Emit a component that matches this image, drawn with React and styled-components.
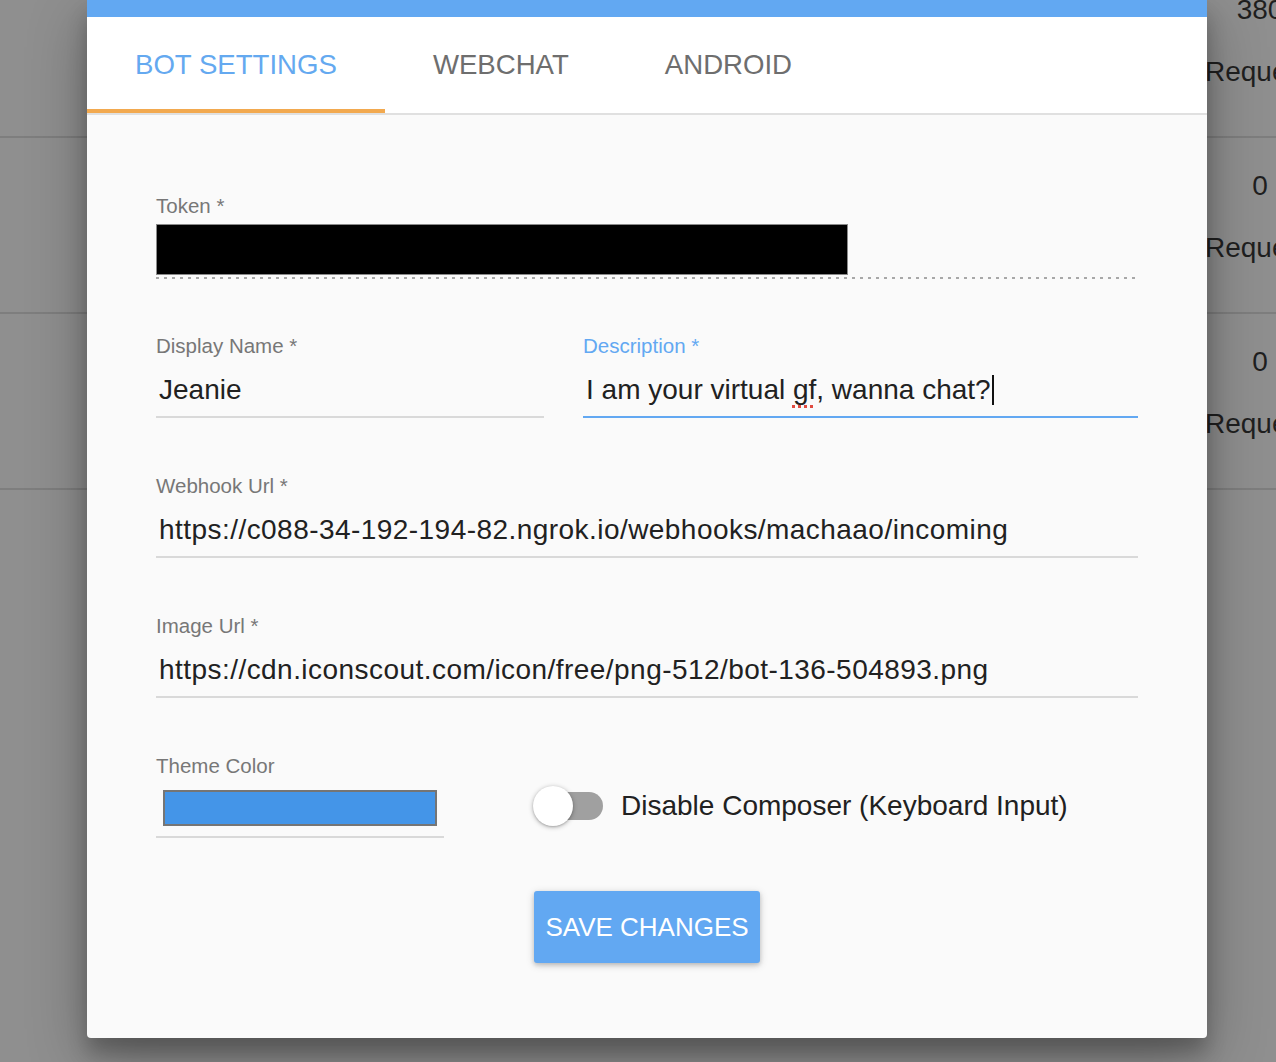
import React from "react";
import styled, { createGlobalStyle } from "styled-components";

const GlobalStyle = createGlobalStyle`
  html, body {
    margin: 0;
    padding: 0;
    overflow: hidden;
  }
  body {
    font-family: "Liberation Sans", Arial, Helvetica, sans-serif;
  }
  * {
    box-sizing: border-box;
  }
`;

const Page = styled.div`
  position: relative;
  width: 100vw;
  height: 100vh;
  background-color: #8f8f8f;
  overflow: hidden;
`;

const Backdrop = styled.div`
  display: flex;
  flex-direction: column;
  margin-top: -38px;
`;

const BackRow = styled.div`
  height: 176px;
  border-bottom: 2px solid #7e7e7e;
  display: flex;
  justify-content: flex-end;
`;

const Stat = styled.div`
  width: 110px;
  margin-right: -39px;
  padding-top: 33px;
  display: flex;
  flex-direction: column;
  gap: 32px;
  text-align: center;
  font-size: 28px;
  line-height: 30px;
  color: #1f1f1f;
  white-space: nowrap;
`;

const Dialog = styled.div`
  position: absolute;
  left: 87px;
  top: 0;
  width: 1120px;
  background-color: #fafafa;
  border-radius: 0 0 4px 4px;
  box-shadow: 0 19px 60px rgba(0, 0, 0, 0.3), 0 15px 20px rgba(0, 0, 0, 0.22);
`;

const TopBar = styled.div`
  height: 17px;
  background-color: #62a8f2;
`;

const Tabs = styled.div`
  display: flex;
  background-color: #ffffff;
  border-bottom: 2px solid #e0e0e0;
`;

const Tab = styled.div`
  height: 96px;
  padding: 4px 48px 0;
  display: flex;
  align-items: center;
  font-size: 27.6px;
  color: ${({ $active }) => ($active ? "#64a9f0" : "#6e6e6e")};
  border-bottom: 4px solid ${({ $active }) => ($active ? "#f2a94f" : "transparent")};
  cursor: pointer;
`;

const Form = styled.div`
  display: flex;
  flex-direction: column;
  padding: 79px 69px 75px;
`;

const Row = styled.div`
  height: ${({ $h }) => $h || 140}px;
  display: flex;
  gap: 39px;
`;

const Field = styled.div`
  display: flex;
  flex-direction: column;
  width: ${({ $w }) => ($w ? `${$w}px` : "auto")};
  flex: ${({ $w }) => ($w ? "none" : "1")};
`;

const Label = styled.div`
  height: 24px;
  line-height: 24px;
  font-size: 20.5px;
  color: ${({ $focused }) => ($focused ? "#62a8f2" : "#777777")};
`;

const TokenBox = styled.div`
  margin-top: 6px;
  width: 692px;
  height: 51px;
  background-color: #000;
  border: 1px solid #8a8a8a;
`;

const DottedLine = styled.div`
  margin-top: 2px;
  height: 2px;
  background-image: repeating-linear-gradient(
    to right,
    #a8a8a8 0 3px,
    transparent 3px 8px
  );
`;

const InputBox = styled.div`
  margin-top: 6px;
  height: 54px;
  padding-left: 3px;
  display: flex;
  align-items: center;
  font-size: 28px;
  letter-spacing: ${({ $spaced }) => ($spaced ? "0.45px" : "0")};
  color: #212121;
  white-space: nowrap;
  border-bottom: 2px solid ${({ $focused }) => ($focused ? "#62a8f2" : "#d9d9d9")};
`;

const Misspelled = styled.span`
  text-decoration: underline dotted #e04a3f;
  text-decoration-thickness: 3px;
  text-underline-offset: 6px;
`;

const Caret = styled.span`
  display: inline-block;
  width: 2px;
  height: 30px;
  margin-left: 1px;
  background-color: #111;
  vertical-align: middle;
`;

const Swatch = styled.div`
  margin: 0 0 4px 4px;
  width: 274px;
  height: 36px;
  background-color: ${({ $color }) => $color};
  border: 2px solid #757575;
`;

const ToggleRow = styled.label`
  margin: 32px 0 0 50px;
  height: 40px;
  display: flex;
  align-items: center;
  gap: 18px;
  font-size: 28px;
  color: #212121;
  cursor: pointer;
`;

const Toggle = styled.div`
  position: relative;
  width: 70px;
  height: 40px;
`;

const Track = styled.div`
  position: absolute;
  left: 10px;
  top: 6px;
  width: 60px;
  height: 28px;
  border-radius: 14px;
  background-color: #a0a0a0;
`;

const Thumb = styled.div`
  position: absolute;
  left: 0;
  top: 0;
  width: 40px;
  height: 40px;
  border-radius: 50%;
  background-color: #fff;
  box-shadow: 0 1px 5px rgba(0, 0, 0, 0.3), 0 1px 2px rgba(0, 0, 0, 0.15);
`;

const SaveButton = styled.button`
  align-self: center;
  width: 226px;
  height: 72px;
  border: none;
  border-radius: 3px;
  background-color: #62a8f2;
  color: #fff;
  font-family: inherit;
  font-size: 26px;
  text-transform: uppercase;
  cursor: pointer;
  box-shadow: 0 2px 8px rgba(0, 0, 0, 0.16), 0 2px 4px rgba(0, 0, 0, 0.16);
`;

const stats = ["380", "0", "0"];

export default function App() {
  return (
    <>
      <GlobalStyle />
      <Page>
        <Backdrop>
          {stats.map((n, i) => (
            <BackRow key={i}>
              <Stat>
                <span>{n}</span>
                <span>Requests</span>
              </Stat>
            </BackRow>
          ))}
        </Backdrop>

        <Dialog>
          <TopBar />
          <Tabs>
            <Tab $active>BOT SETTINGS</Tab>
            <Tab>WEBCHAT</Tab>
            <Tab>ANDROID</Tab>
          </Tabs>

          <Form>
            <Row>
              <Field>
                <Label>Token *</Label>
                <TokenBox />
                <DottedLine />
              </Field>
            </Row>

            <Row>
              <Field $w={388}>
                <Label>Display Name *</Label>
                <InputBox>Jeanie</InputBox>
              </Field>
              <Field>
                <Label $focused>Description *</Label>
                <InputBox $focused>
                  I am your virtual&nbsp;<Misspelled>gf</Misspelled>, wanna chat?
                  <Caret />
                </InputBox>
              </Field>
            </Row>

            <Row>
              <Field>
                <Label>Webhook Url *</Label>
                <InputBox $spaced>https://c088-34-192-194-82.ngrok.io/webhooks/machaao/incoming</InputBox>
              </Field>
            </Row>

            <Row>
              <Field>
                <Label>Image Url *</Label>
                <InputBox $spaced>https://cdn.iconscout.com/icon/free/png-512/bot-136-504893.png</InputBox>
              </Field>
            </Row>

            <Row $h={137}>
              <Field $w={288}>
                <Label>Theme Color</Label>
                <InputBox>
                  <Swatch $color="#4495e8" />
                </InputBox>
              </Field>
              <ToggleRow>
                <Toggle>
                  <Track />
                  <Thumb />
                </Toggle>
                Disable Composer (Keyboard Input)
              </ToggleRow>
            </Row>

            <SaveButton>Save Changes</SaveButton>
          </Form>
        </Dialog>
      </Page>
    </>
  );
}
